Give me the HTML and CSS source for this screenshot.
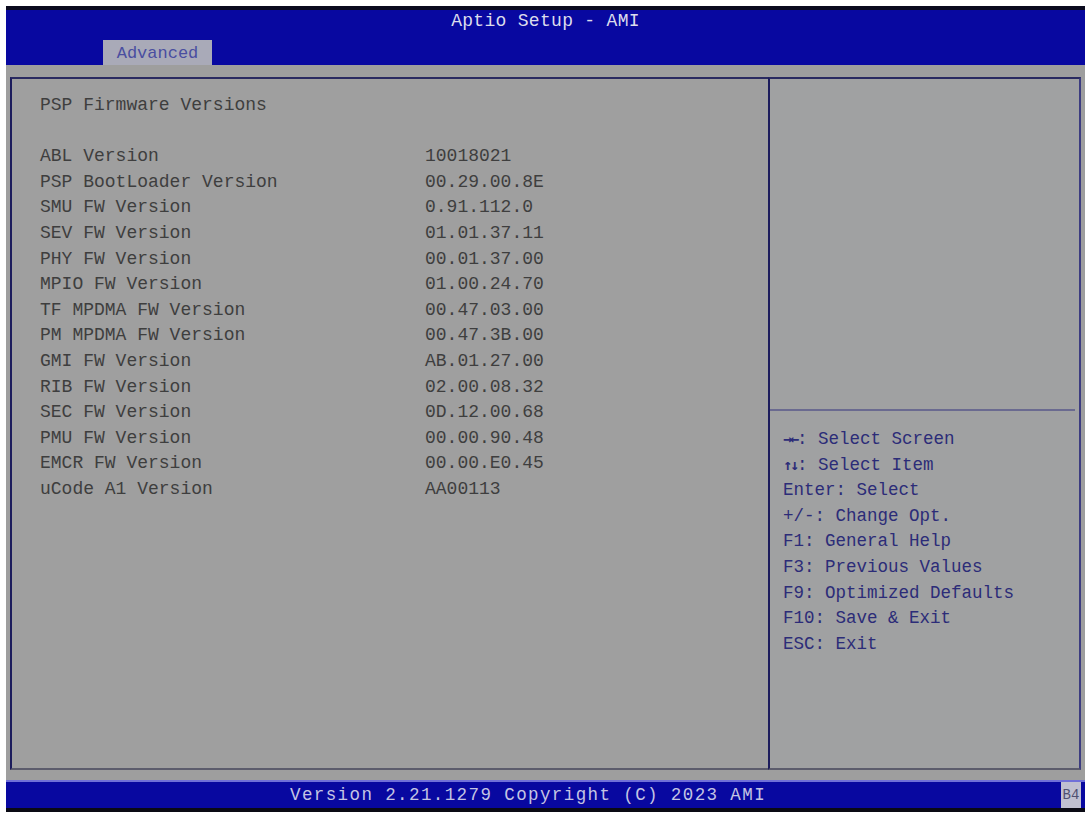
FILE: index.html
```html
<!DOCTYPE html>
<html>
<head>
<meta charset="utf-8">
<title>Aptio Setup - AMI</title>
<link rel="stylesheet" href="styles.css">
</head>
<body>
<div class="screen">
  <header class="header">
    <div class="title">Aptio Setup - AMI</div>
    <div class="tabs"><div class="tab">Advanced</div></div>
  </header>
  <main class="body">
    <div class="panels">
      <section class="left">
        <div class="line">PSP Firmware Versions</div>
        <div class="line">&nbsp;</div>
        <div class="row"><span class="label">ABL Version</span><span class="value">10018021</span></div>
        <div class="row"><span class="label">PSP BootLoader Version</span><span class="value">00.29.00.8E</span></div>
        <div class="row"><span class="label">SMU FW Version</span><span class="value">0.91.112.0</span></div>
        <div class="row"><span class="label">SEV FW Version</span><span class="value">01.01.37.11</span></div>
        <div class="row"><span class="label">PHY FW Version</span><span class="value">00.01.37.00</span></div>
        <div class="row"><span class="label">MPIO FW Version</span><span class="value">01.00.24.70</span></div>
        <div class="row"><span class="label">TF MPDMA FW Version</span><span class="value">00.47.03.00</span></div>
        <div class="row"><span class="label">PM MPDMA FW Version</span><span class="value">00.47.3B.00</span></div>
        <div class="row"><span class="label">GMI FW Version</span><span class="value">AB.01.27.00</span></div>
        <div class="row"><span class="label">RIB FW Version</span><span class="value">02.00.08.32</span></div>
        <div class="row"><span class="label">SEC FW Version</span><span class="value">0D.12.00.68</span></div>
        <div class="row"><span class="label">PMU FW Version</span><span class="value">00.00.90.48</span></div>
        <div class="row"><span class="label">EMCR FW Version</span><span class="value">00.00.E0.45</span></div>
        <div class="row"><span class="label">uCode A1 Version</span><span class="value">AA00113</span></div>
      </section>
      <aside class="right">
        <div class="help-top"></div>
        <div class="help">
          <div class="line"><span class="arrows">→←</span>: Select Screen</div>
          <div class="line"><span class="arrows">↑↓</span>: Select Item</div>
          <div class="line">Enter: Select</div>
          <div class="line">+/-: Change Opt.</div>
          <div class="line">F1: General Help</div>
          <div class="line">F3: Previous Values</div>
          <div class="line">F9: Optimized Defaults</div>
          <div class="line">F10: Save &amp; Exit</div>
          <div class="line">ESC: Exit</div>
        </div>
      </aside>
    </div>
  </main>
  <footer class="footer">
    <span class="version">Version 2.21.1279 Copyright (C) 2023 AMI</span>
    <span class="code">B4</span>
  </footer>
</div>
</body>
</html>
```
FILE: styles.css
```css
html, body {
  margin: 0;
  padding: 0;
  background: #ffffff;
}
body {
  font-family: "Liberation Mono", "DejaVu Sans Mono", monospace;
  font-size: 18px;
}
.screen {
  margin: 6px 2px 5px 6px;
  width: 1079px;
  height: 806px;
  background: #9e9e9e;
  border-top: 4px solid #0a0a1e;
  border-bottom: 4px solid #0a0a14;
  box-sizing: border-box;
  display: flex;
  flex-direction: column;
}
.header {
  height: 55px;
  background: #0808a0;
  display: flex;
  flex-direction: column;
}
.title {
  height: 21px;
  line-height: 22px;
  text-align: center;
  color: #dcdcec;
  letter-spacing: 0.3px;
}
.tabs {
  margin-top: 9px;
  height: 25px;
  display: flex;
}
.tab {
  margin-left: 97px;
  width: 109px;
  height: 25px;
  line-height: 27px;
  background: #a9aab8;
  color: #4a4ea0;
  text-align: center;
  font-size: 17px;
}
.body {
  height: 715px;
  padding: 12px 4px 10px 4px;
  box-sizing: border-box;
}
.panels {
  height: 693px;
  display: flex;
}
.left {
  width: 758px;
  box-sizing: border-box;
  border-left: 2px solid #1c1c5c;
  border-top: 2px solid #2a2a60;
  border-bottom: 2px solid #5c5c6c;
  padding: 14px 0 0 28px;
  color: #3e3e3e;
  background: #9f9f9f;
}
.line, .row {
  height: 25.6px;
  line-height: 25.6px;
  white-space: pre;
}
.row {
  display: flex;
}
.label {
  width: 385px;
}
.right {
  flex: 1;
  box-sizing: border-box;
  border-left: 2px solid #1c1c5c;
  border-right: 2px solid #3c3c80;
  border-top: 2px solid #2a2a60;
  border-bottom: 2px solid #5c5c6c;
  display: flex;
  flex-direction: column;
  background: #a0a1a2;
}
.help-top {
  height: 330px;
  border-bottom: 2px solid #6a6a90;
  margin-right: 4px;
}
.help {
  padding: 16px 0 0 13px;
  color: #2c2c78;
  font-size: 17.5px;
}
.arrows {
  font-family: "DejaVu Sans Mono", monospace;
  font-weight: bold;
  font-size: 15px;
  letter-spacing: -2px;
}
.footer {
  height: 28px;
  box-sizing: border-box;
  border-top: 2px solid #7070d8;
  background: #0808a0;
  display: flex;
  align-items: center;
}
.version {
  margin-left: 284px;
  color: #c4c4e4;
  letter-spacing: 1.4px;
  font-size: 17.5px;
}
.code {
  margin-left: auto;
  margin-right: 4px;
  width: 20px;
  height: 26px;
  line-height: 26px;
  background: #c0c0d0;
  color: #505070;
  font-size: 14px;
  text-align: center;
}
```
